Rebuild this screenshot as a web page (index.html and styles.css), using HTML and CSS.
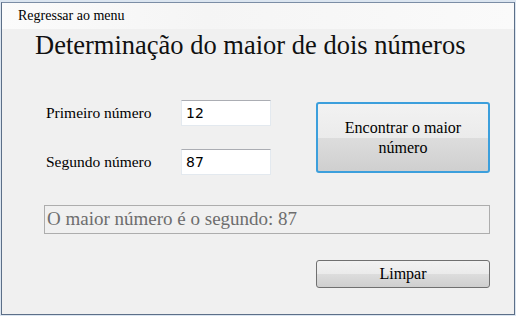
FILE: index.html
```html
<!DOCTYPE html>
<html lang="pt">
<head>
    <meta charset="UTF-8">
    <title>Maior de dois números</title>

    <link rel="stylesheet" href="styles.css">

</head>
<body>

<div id="window">
    <div class="menu_bar">
        <span class="menu_item">Regressar ao menu</span>
    </div>

    <div class="content">
        <h1 class="title">Determinação do maior de dois números</h1>

        <div class="form_row">
            <div class="fields">
                <div class="field">
                    <label for="first">Primeiro número</label>
                    <input type="text" id="first" value="12">
                </div>
                <div class="field">
                    <label for="second">Segundo número</label>
                    <input type="text" id="second" value="87">
                </div>
            </div>
            <button class="btn btn_find">Encontrar o maior<br>número</button>
        </div>

        <div class="result">O maior número é o segundo: 87</div>

        <div class="bottom_row">
            <button class="btn btn_clear">Limpar</button>
        </div>
    </div>
</div>

</body>
</html>
```

FILE: styles.css
```css
body{
    margin: 0;
    background-color: #dbe5f0;
    font-family: "Liberation Serif", "DejaVu Serif", serif;
}

#window{
    width: 514px;
    height: 313px;
    margin: 2px 0 0 1px;
    border: 1px solid #5c6f88;
    border-top-color: #7b8da5;
    background-color: #f0f0f0;
    box-sizing: border-box;
    display: flex;
    flex-direction: column;
}

.menu_bar{
    height: 26px;
    background: linear-gradient(to right, #fbfbfb, #f5f5f5 40%, #fafafa);
    padding-left: 16px;
    display: flex;
    align-items: center;
}

.menu_item{
    font-size: 14px;
    color: #000;
}

.content{
    padding: 0 24px 0 42px;
}

.title{
    margin: 1px 0 0 -9px;
    font-size: 26.5px;
    font-weight: normal;
    color: #111;
    line-height: 30px;
}

.form_row{
    display: flex;
    justify-content: space-between;
    margin-top: 42px;
}

.fields{
    display: flex;
    flex-direction: column;
    gap: 23px;
    margin-top: -2px;
}

.field{
    display: flex;
    align-items: center;
}

.field label{
    width: 135px;
    padding-left: 2px;
    font-size: 15.5px;
    color: #000;
}

.field input{
    width: 90px;
    height: 26px;
    box-sizing: border-box;
    border: 1px solid #e3e9ef;
    border-top-color: #abadb3;
    background: #fff;
    padding: 0 4px;
    font-family: "DejaVu Sans", sans-serif;
    font-size: 14px;
    color: #000;
}

.btn{
    font-family: "Liberation Serif", "DejaVu Serif", serif;
    color: #000;
    width: 174px;
    border-radius: 3px;
    background: linear-gradient(to bottom, #f2f2f2, #ebebeb 50%, #dddddd 50%, #cfcfcf);
}

.btn_find{
    height: 71px;
    border: 2px solid #3c9fdc;
    font-size: 16px;
    line-height: 20px;
}

.result{
    margin-top: 30px;
    height: 29px;
    box-sizing: border-box;
    border: 1px solid #adadad;
    padding-left: 2px;
    font-size: 19px;
    line-height: 26px;
    color: #6d6d6d;
}

.bottom_row{
    display: flex;
    justify-content: flex-end;
    margin-top: 26px;
}

.btn_clear{
    height: 28px;
    border: 1px solid #707070;
    font-size: 16px;
}
```
